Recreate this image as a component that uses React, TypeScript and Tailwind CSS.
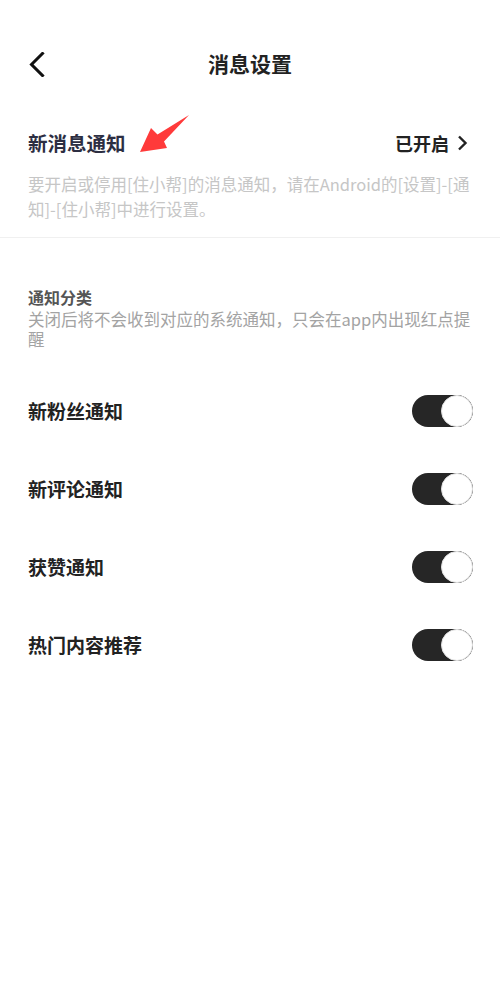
import React from "react";

const font = { fontFamily: '"Noto Sans CJK SC", "Noto Sans", sans-serif' };

function Toggle() {
  return (
    <div className="relative h-[32px] w-[61px] rounded-full bg-[#262626]">
      <div className="absolute right-0 top-0 h-[32px] w-[32px] rounded-full border border-[#e2e2e2] bg-white" />
    </div>
  );
}

const rows = ["新粉丝通知", "新评论通知", "获赞通知", "热门内容推荐"];

export default function App() {
  return (
    <div className="relative min-h-[1000px] w-[500px] bg-white pt-[38px]" style={font}>
      {/* header */}
      <div className="relative flex h-[50px] items-center justify-center">
        <div className="absolute left-[29px] top-[14px]">
          <svg width="16" height="25" viewBox="0 0 16 25" fill="none">
            <path d="M13.5 1.5 L2.5 12.5 L13.5 23.5" stroke="#111" strokeWidth="3" strokeLinecap="square" />
          </svg>
        </div>
        <div className="text-[21px] font-bold leading-[30px] text-[#222]">消息设置</div>
      </div>

      {/* new message notification */}
      <div className="px-[28px] pt-[40px]">
        <div className="flex h-[30px] items-center justify-between">
          <div className="text-[19.5px] font-bold leading-[30px] text-[#2c2e42]">新消息通知</div>
          <div className="mr-[4px] flex items-center gap-[8px]">
            <span className="text-[18px] font-bold leading-[30px] text-[#222]">已开启</span>
            <svg width="11" height="16" viewBox="0 0 11 16" fill="none">
              <path d="M2 1.5 L8.5 8 L2 14.5" stroke="#222" strokeWidth="2.4" />
            </svg>
          </div>
        </div>
        <div className="mt-[14px] pb-[15px] text-[16.5px] leading-[25px] text-[#c6c6c6]">
          <div className="whitespace-nowrap">要开启或停用[住小帮]的消息通知，请在Android的[设置]-[通</div>
          <div className="whitespace-nowrap">知]-[住小帮]中进行设置。</div>
        </div>
      </div>
      <div className="h-px bg-[#f0f0f0]" />

      {/* categories */}
      <div className="px-[28px] pt-[48px]">
        <div className="text-[16px] font-bold leading-[22px] text-[#555]">通知分类</div>
        <div className="mt-[1px] text-[16.5px] leading-[20px] text-[#a3a3a3]">
          <div className="whitespace-nowrap">关闭后将不会收到对应的系统通知，只会在app内出现红点提</div>
          <div>醒</div>
        </div>
      </div>

      <div className="mt-[23px] px-[28px]">
        {rows.map((r) => (
          <div key={r} className="flex h-[78px] items-center justify-between">
            <div className="text-[19px] font-bold text-[#222]">{r}</div>
            <div className="mr-[-1px]">
              <Toggle />
            </div>
          </div>
        ))}
      </div>

      {/* red annotation arrow */}
      <svg className="absolute left-[130px] top-[105px]" width="70" height="55" viewBox="0 0 70 55">
        <polygon points="10,47 21,23 27.5,29.5 59,10 34,36.5 37,43" fill="#ff3a3a" />
      </svg>
    </div>
  );
}
